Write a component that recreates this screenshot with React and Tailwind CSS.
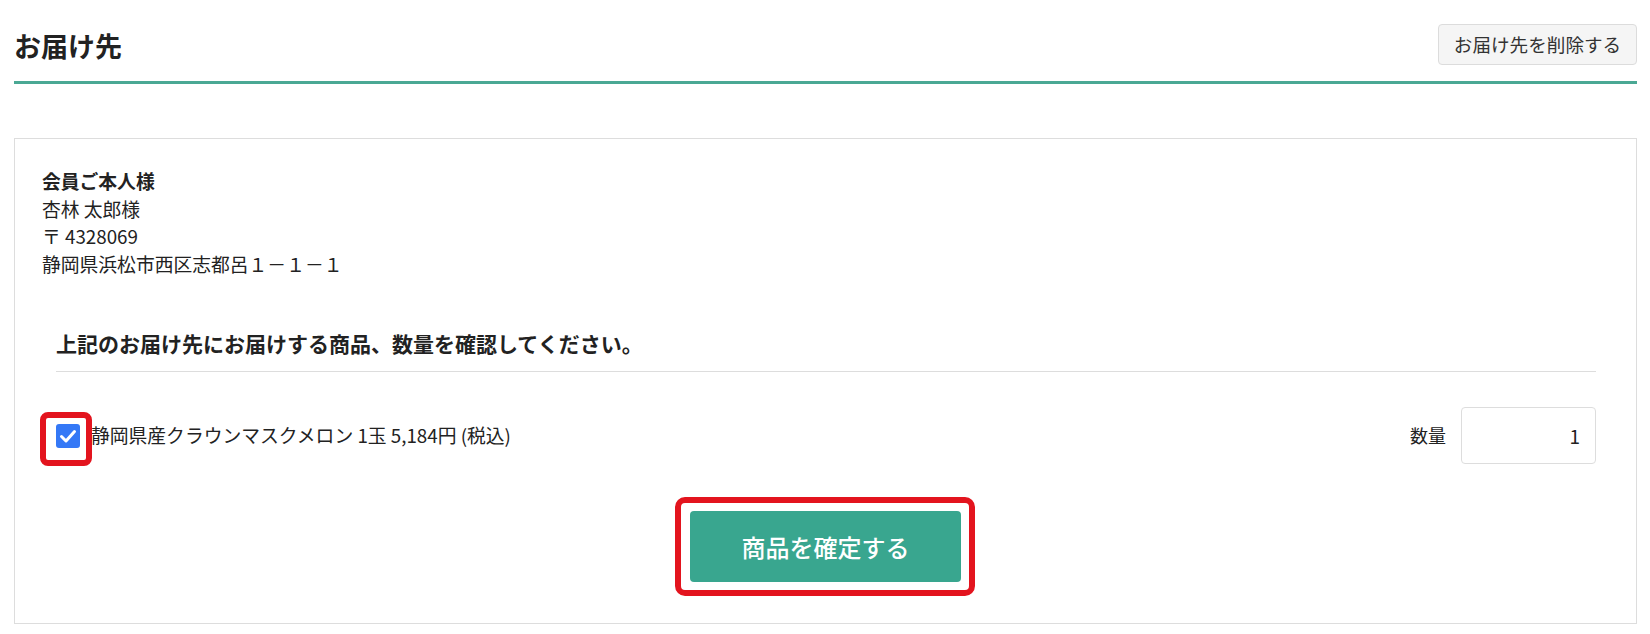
import React, { useState } from 'react';

function CheckIcon() {
  return (
    <svg viewBox="0 0 24 24" className="w-[24px] h-[24px]">
      <rect x="0" y="0" width="24" height="24" rx="3" fill="#3478f6" />
      <path d="M5.5 12.5 L10 17 L18.5 7.5" fill="none" stroke="#fff" strokeWidth="3" strokeLinecap="round" strokeLinejoin="round" />
    </svg>
  );
}

export default function App() {
  const [qty, setQty] = useState('1');

  return (
    <div className="min-h-[634px] bg-white text-[#222] font-['Noto_Sans_CJK_JP','Noto_Sans',sans-serif]">
      <div className="ml-[14px] mr-[13px]">
        {/* header */}
        <div className="flex items-center justify-between pt-[24px] pb-[16px] border-b-[3px] border-[#4aa894]">
          <h2 className="text-[27px] font-bold leading-none pt-[2px]">お届け先</h2>
          <button className="h-[41px] w-[199px] rounded-[4px] border border-[#dcdcdc] bg-[#f5f5f5] text-[18.6px] text-[#333] leading-none">
            お届け先を削除する
          </button>
        </div>

        {/* card */}
        <div className="mt-[54px] h-[486px] border border-[#dddddd] px-[27px] pt-[28px]">
          <div className="text-[18.8px] leading-[27.5px]">
            <p className="font-bold">会員ご本人様</p>
            <p>杏林 太郎様</p>
            <p>〒 4328069</p>
            <p>静岡県浜松市西区志都呂１－１－１</p>
          </div>

          <div className="ml-[14px] mr-[13px] mt-[51px]">
            <h3 className="text-[21px] font-bold leading-[30px] pb-[13px] border-b border-[#dddddd]">
              上記のお届け先にお届けする商品、数量を確認してください。
            </h3>

            <div className="mt-[35px] flex items-center justify-between">
              <label className="flex items-center gap-[11px]">
                <span className="relative flex">
                  <CheckIcon />
                  <span className="absolute -left-[16px] -top-[12px] w-[52px] h-[54px] rounded-[8px] border-[6px] border-[#e3141e]" />
                </span>
                <span className="text-[18.8px] leading-none">静岡県産クラウンマスクメロン 1玉 5,184円 (税込)</span>
              </label>

              <div className="flex items-center gap-[15px]">
                <span className="text-[18px]">数量</span>
                <input
                  value={qty}
                  onChange={(e) => setQty(e.target.value)}
                  className="h-[57px] w-[135px] rounded-[4px] border border-[#dddddd] pr-[15px] text-right text-[19px] outline-none"
                />
              </div>
            </div>

            <div className="mt-[47px] flex justify-center -ml-[14px] -mr-[13px]">
              <div className="relative">
                <button className="h-[71px] w-[271px] rounded-[4px] bg-[#39a68f] text-[24px] font-medium text-white leading-none">
                  商品を確定する
                </button>
                <span className="absolute -left-[15px] -top-[14px] -right-[14px] -bottom-[14px] rounded-[10px] border-[6px] border-[#e3141e]" />
              </div>
            </div>
          </div>
        </div>
      </div>
    </div>
  );
}
